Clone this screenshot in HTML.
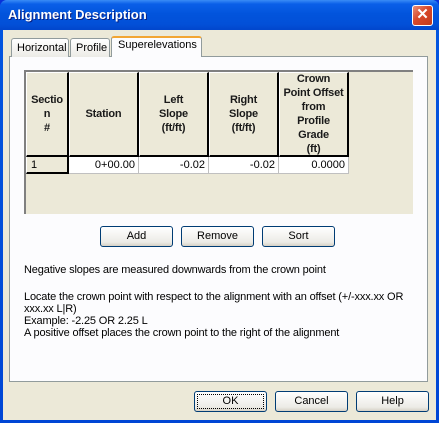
<!DOCTYPE html>
<html><head><style>
*{margin:0;padding:0;box-sizing:border-box}
body{width:439px;height:423px;overflow:hidden;font-family:"Liberation Sans",sans-serif;font-size:11px;color:#000;background:#0831d9}
.a{position:absolute}
#win{left:0;top:0;width:439px;height:423px;background:linear-gradient(#0a5fe8,#0256e0 8px,#0046d5);border-radius:7px 7px 0 0}
#title{left:0;top:0;width:439px;height:30px;background:linear-gradient(#3a8cf6 0,#0a5fe8 4px,#0254dc 14px,#0250d8 24px,#0146cc 30px);border-radius:7px 7px 0 0}
#tt{left:8px;top:7px;color:#fff;font-weight:bold;font-size:13px;text-shadow:1px 1px #0a1f80}
#x{left:412px;top:5px;width:21px;height:21px;background:linear-gradient(135deg,#e9907a,#d8482a 45%,#c23a1c);border:1px solid #fff;border-radius:3px;color:#fff;font-weight:bold;font-size:15px;text-align:center;line-height:18px}
#body{left:3px;top:30px;width:433px;height:390px;background:#ece9d8}
.tab{top:38px;height:19px;border:1px solid #919b9c;border-bottom:none;background:linear-gradient(#fff,#ecebe6);padding:3px 0 0 5px;border-radius:3px 3px 0 0}
#panel{left:9px;top:56px;width:419px;height:326px;background:#fcfcfe;border:1px solid #919b9c}
#grid{left:24px;top:70px;width:389px;height:144px;background:#ece9d8;border-top:2px solid #808080;border-left:2px solid #808080}
.h{top:72px;height:85px;border:1px solid #000;border-top:1px solid #fff;border-left:1px solid #fff;border-right:2px solid #000;border-bottom:2px solid #000;background:#ece9d8;font-weight:bold;text-align:center;display:flex;align-items:center;justify-content:center;line-height:14px;color:#1a1a1a;white-space:nowrap;letter-spacing:-0.2px}
.d{top:157px;height:17px;background:#fff;border-right:1px solid #c0c0c0;border-bottom:1px solid #c0c0c0;text-align:right;padding:2px 3px 0 0}
.btn{height:21px;border:1px solid #003c74;border-radius:3px;background:linear-gradient(#fff,#ecebe6 80%,#d6d0c5);text-align:center;line-height:19px}
.t{left:24px;white-space:nowrap;letter-spacing:-0.15px}
</style></head><body>
<div class="a" id="win"></div>
<div class="a" id="title"></div>
<div class="a" id="tt">Alignment Description</div>
<div class="a" id="x">✕</div>
<div class="a" id="body"></div>
<div class="a" id="panel"></div>
<div class="a tab" style="left:11px;width:58px">Horizontal</div>
<div class="a tab" style="left:70px;width:40px">Profile</div>
<div class="a" style="left:111px;top:36px;width:91px;height:21px;background:#fcfcfe;border:1px solid #919b9c;border-top:2px solid #f2a532;border-bottom:none;border-radius:3px 3px 0 0;padding:1px 0 0 6px">Superelevations</div>
<div class="a" id="grid"></div>
<div class="a h" style="left:26px;width:43px">Sectio<br>n<br>#</div>
<div class="a h" style="left:69px;width:70px">Station</div>
<div class="a h" style="left:139px;width:70px">Left<br>Slope<br>(ft/ft)</div>
<div class="a h" style="left:209px;width:70px">Right<br>Slope<br>(ft/ft)</div>
<div class="a h" style="left:279px;width:70px">Crown<br>Point Offset<br>from<br>Profile<br>Grade<br>(ft)</div>
<div class="a d" style="left:26px;width:43px;background:#ece9d8;text-align:left;padding-left:4px;border-right:2px solid #000;border-bottom:2px solid #000;border-left:1px solid #fff">1</div>
<div class="a d" style="left:69px;width:70px">0+00.00</div>
<div class="a d" style="left:139px;width:70px">-0.02</div>
<div class="a d" style="left:209px;width:70px">-0.02</div>
<div class="a d" style="left:279px;width:70px">0.0000</div>
<div class="a btn" style="left:100px;top:226px;width:73px">Add</div>
<div class="a btn" style="left:181px;top:226px;width:73px">Remove</div>
<div class="a btn" style="left:262px;top:226px;width:73px">Sort</div>
<div class="a t" style="top:264px">Negative slopes are measured downwards from the crown point</div>
<div class="a t" style="top:291px;line-height:12px">Locate the crown point with respect to the alignment with an offset (+/-xxx.xx OR<br>xxx.xx L|R)<br>Example: -2.25 OR 2.25 L<br>A positive offset places the crown point to the right of the alignment</div>
<div class="a btn" style="left:194px;top:391px;width:73px;outline:1px dotted #000;outline-offset:-4px">OK</div>
<div class="a btn" style="left:275px;top:391px;width:73px">Cancel</div>
<div class="a btn" style="left:356px;top:391px;width:73px">Help</div>
</body></html>
